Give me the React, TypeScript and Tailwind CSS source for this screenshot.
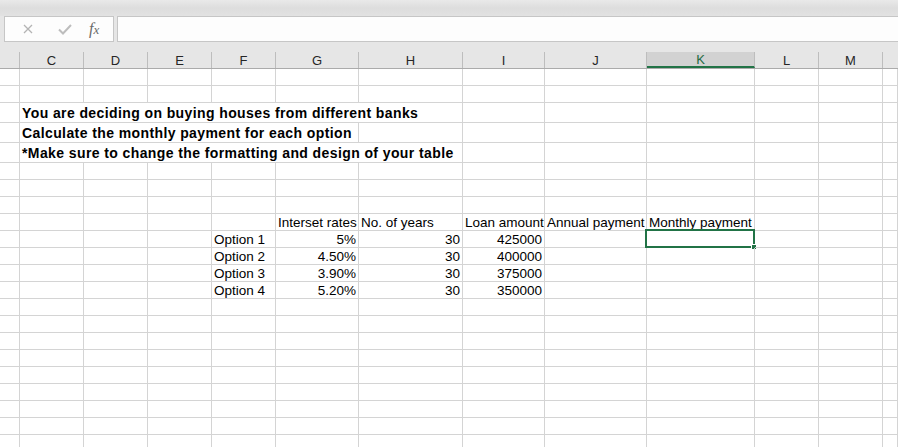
import React from 'react'

type Cell = {
  text?: string
  right?: boolean
  span?: number
  bold?: boolean
  sel?: boolean
}

const COLS = ['', 'C', 'D', 'E', 'F', 'G', 'H', 'I', 'J', 'K', 'L', 'M', '']
const GRID =
  'grid grid-cols-[20px_64px_64px_64px_64px_83px_104px_82px_102px_108px_64px_64px_15px]'

const spanClass: Record<number, string> = {
  1: 'col-span-1',
  5: 'col-span-5',
  6: 'col-span-6',
}

const rows: { tall?: boolean; cells: Record<number, Cell> }[] = [
  { cells: {} },
  { cells: {} },
  {
    tall: true,
    cells: { 1: { text: 'You are deciding on buying houses from different banks', bold: true, span: 6 } },
  },
  {
    tall: true,
    cells: { 1: { text: 'Calculate the monthly payment for each option', bold: true, span: 5 } },
  },
  {
    tall: true,
    cells: {
      1: { text: '*Make sure to change the formatting and design of your table', bold: true, span: 6 },
    },
  },
  { cells: {} },
  { cells: {} },
  { cells: {} },
  {
    cells: {
      5: { text: 'Interset rates' },
      6: { text: 'No. of years' },
      7: { text: 'Loan amount' },
      8: { text: 'Annual payment' },
      9: { text: 'Monthly payment' },
    },
  },
  {
    cells: {
      4: { text: 'Option 1' },
      5: { text: '5%', right: true },
      6: { text: '30', right: true },
      7: { text: '425000', right: true },
      9: { sel: true },
    },
  },
  {
    cells: {
      4: { text: 'Option 2' },
      5: { text: '4.50%', right: true },
      6: { text: '30', right: true },
      7: { text: '400000', right: true },
    },
  },
  {
    cells: {
      4: { text: 'Option 3' },
      5: { text: '3.90%', right: true },
      6: { text: '30', right: true },
      7: { text: '375000', right: true },
    },
  },
  {
    cells: {
      4: { text: 'Option 4' },
      5: { text: '5.20%', right: true },
      6: { text: '30', right: true },
      7: { text: '350000', right: true },
    },
  },
  ...Array.from({ length: 9 }, () => ({ cells: {} })),
]

function Row({ tall, cells }: { tall?: boolean; cells: Record<number, Cell> }) {
  const out: React.ReactNode[] = []
  let i = 0
  while (i < COLS.length) {
    const c = cells[i] ?? {}
    const span = c.span ?? 1
    out.push(
      <div
        key={i}
        className={`relative flex items-end whitespace-nowrap border-r border-b border-[#d4d4d4] ${
          spanClass[span]
        } ${c.right ? 'justify-end pr-[2px]' : 'pl-[2px]'} ${
          c.bold
            ? 'text-[14px] font-bold tracking-[0.4px] leading-[17px]'
            : 'text-[13.5px] leading-[15px]'
        }`}
      >
        {c.text}
        {c.sel && (
          <div className="absolute -left-[2px] -right-[1px] -top-[2px] -bottom-[1px] border-2 border-[#217346]">
            <div className="absolute -right-[4px] -bottom-[4px] h-[6px] w-[6px] border border-white bg-[#217346]" />
          </div>
        )}
      </div>,
    )
    i += span
  }
  return <div className={`${GRID} ${tall ? 'h-[20px]' : 'h-[17px]'}`}>{out}</div>
}

export default function App() {
  return (
    <div className="h-[447px] w-[898px] overflow-hidden bg-white font-['Liberation_Sans',Arial,sans-serif] text-black">
      <div className="bg-[#e6e6e6]">
        <div className="h-[16px] bg-gradient-to-b from-[#e9e9e9] via-[#dddddd] to-[#e2e2e2]" />
        <div className="flex h-[26px]">
          <div className="ml-[4px] flex w-[110px] items-center border border-[#c6c6c6] bg-[#fdfdfd]">
            <svg width="10" height="10" viewBox="0 0 10 10" className="ml-[18px]">
              <path d="M1 1 L9 9 M9 1 L1 9" stroke="#b4b4b4" strokeWidth="1.3" fill="none" />
            </svg>
            <svg width="14" height="11" viewBox="0 0 14 11" className="ml-[25px]">
              <path d="M1 5.5 L5 9.5 L13 1" stroke="#bdbdbd" strokeWidth="2" fill="none" />
            </svg>
            <span className="ml-[17px] font-['Liberation_Serif',serif] text-[16px] italic leading-none text-[#6a6a6a]">
              f<span className="text-[13px]">x</span>
            </span>
          </div>
          <div className="ml-[3px] flex-1 border-y border-l border-[#c6c6c6] bg-[#fdfdfd]" />
        </div>
        <div className="h-[10px]" />
        <div className={`${GRID} h-[17px] border-b border-[#ababab]`}>
          {COLS.map((c, i) => (
            <div
              key={i}
              className={`flex items-center justify-center text-[13px] leading-none ${
                i < COLS.length - 1 ? 'border-r border-[#bdbdbd]' : ''
              } ${c === 'K' ? 'border-b-2 border-b-[#217346] bg-[#d2d2d2] text-[#1e6b42]' : 'text-[#262626]'}`}
            >
              {c}
            </div>
          ))}
        </div>
      </div>
      {rows.map((r, i) => (
        <Row key={i} tall={r.tall} cells={r.cells} />
      ))}
    </div>
  )
}
